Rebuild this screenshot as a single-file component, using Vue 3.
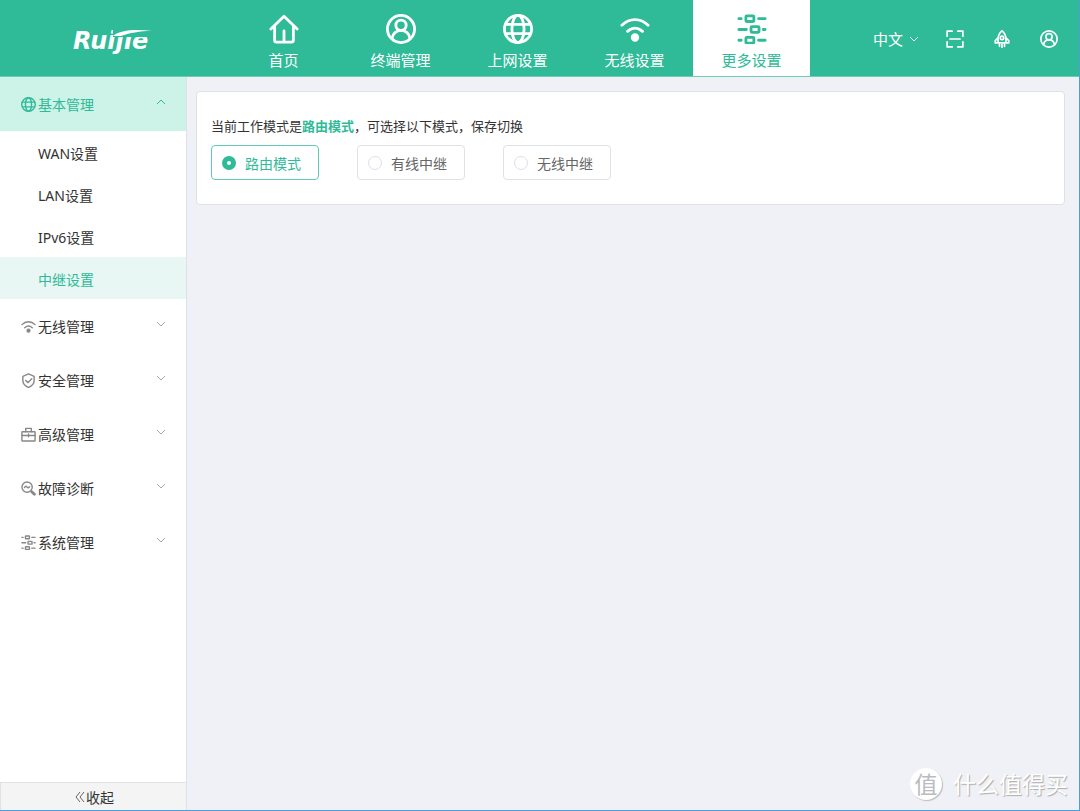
<script setup>
import { ref } from 'vue'

const icons = {
  home: '<path d="M2 16 16 2.500 30 16"/><path d="M6 13v15q0 2 2 2h16q2 0 2-2V13"/><path d="M16 18v11"/>',
  user: '<circle cx="16" cy="16" r="14.500"/><circle cx="16" cy="12" r="5.500"/><path d="M6.500 26c.5-5 4.500-8.500 9.500-8.500s9 3.500 9.500 8.500"/>',
  globe: '<circle cx="16" cy="16" r="14.500"/><ellipse cx="16" cy="16" rx="6.500" ry="14.500"/><path d="M3 11h26M3 21h26"/>',
  wifi: '<path d="M2 12c8-8 20-8 28 0M8 18.500c5-4.500 11-4.500 16 0"/><circle cx="16" cy="25" r="3" fill="currentColor"/>',
  sliders: '<rect x="9.500" y="2" width="8.500" height="6" rx="1"/><path d="M2 5h2.500M23 5h7"/><rect x="15" y="13.500" width="8.500" height="6" rx="1"/><path d="M2 16.500h8M28 16.500h2"/><rect x="9.500" y="25" width="8.500" height="6" rx="1"/><path d="M2 28h2.500M23 28h7"/>',
  shield: '<path d="M16 2 28 7v10c0 6-6 11-12 14C10 28 4 23 4 17V7Z"/><path d="m10 16 5 4.500 8-8"/>',
  briefcase: '<rect x="2" y="10" width="28" height="20" rx="1"/><path d="M10 10V3h12v7M2 18h28M16 15v6M13.500 18h5"/>',
  diagnose: '<circle cx="13" cy="13" r="11"/><path d="M7.500 14c2-4 4-3 5.500-1s3.500 2 5.500-1M21 21l2 2"/><path d="m23.500 23.500 5 5" stroke-width="6"/>',
  scan: '<path d="M2 11V2h9M21 2h9v9M30 21v9h-9M11 30H2v-9M7 16h18"/>',
  rocket: '<path d="M16 1.500c-5 4-7 9-7 15V23h14v-6.500c0-6-2-11-7-15ZM9 14l-5 5v4h5M23 14l5 5v4h-5M11.500 26v3M16 26v5M20.500 26v3"/><circle cx="16" cy="14" r="3"/>'
}

const tabs = [
  { label: '首页', icon: 'home' },
  { label: '终端管理', icon: 'user' },
  { label: '上网设置', icon: 'globe' },
  { label: '无线设置', icon: 'wifi' },
  { label: '更多设置', icon: 'sliders', active: true }
]
const basicItems = ['WAN设置', 'LAN设置', 'IPv6设置', '中继设置']
const groups = [
  { label: '无线管理', icon: 'wifi' },
  { label: '安全管理', icon: 'shield' },
  { label: '高级管理', icon: 'briefcase' },
  { label: '故障诊断', icon: 'diagnose' },
  { label: '系统管理', icon: 'sliders' }
]
const tools = [
  { label: '全屏', icon: 'scan' },
  { label: '优化', icon: 'rocket' },
  { label: '账户', icon: 'user' }
]
const modes = ['路由模式', '有线中继', '无线中继']
const mode = ref('路由模式')
</script>

<template>
  <div class="page">
    <header class="header">
      <a href="#" class="logo">Ruijie
        <svg class="swoosh" viewBox="0 0 40 8" aria-hidden="true">
          <path class="gap" d="M0 0H40V8H0Z" />
          <path class="stroke" d="M0 7C7 1 22 0 39 2C27 2 16 4 8 7Z" />
        </svg>
      </a>
      <nav class="tabs">
        <a v-for="t in tabs" :key="t.label" href="#" class="tab" :class="{ active: t.active }">
          <svg class="icon tab-icon" viewBox="0 0 32 32" v-html="icons[t.icon]"></svg>
          <span>{{ t.label }}</span>
        </a>
      </nav>
      <div class="tools">
        <div class="lang">
          <select aria-label="语言"><option>中文</option></select>
          <svg class="chevron" viewBox="0 0 10 6"><path d="m1 1 4 4 4-4" /></svg>
        </div>
        <button v-for="t in tools" :key="t.label" type="button" class="tool" :aria-label="t.label">
          <svg class="icon tool-icon" viewBox="0 0 32 32" v-html="icons[t.icon]"></svg>
        </button>
      </div>
    </header>

    <div class="body">
      <aside class="sidebar">
        <nav class="menu">
          <button type="button" class="group open" aria-expanded="true">
            <svg class="icon group-icon" viewBox="0 0 32 32" v-html="icons.globe"></svg>
            <span class="group-label">基本管理</span>
            <svg class="chevron" viewBox="0 0 10 6"><path d="m1 5 4-4 4 4" /></svg>
          </button>
          <a v-for="(item, i) in basicItems" :key="item" href="#" class="item" :class="{ active: i === 3 }">{{ item }}</a>
          <button v-for="g in groups" :key="g.label" type="button" class="group" aria-expanded="false">
            <svg class="icon group-icon" viewBox="0 0 32 32" v-html="icons[g.icon]"></svg>
            <span class="group-label">{{ g.label }}</span>
            <svg class="chevron" viewBox="0 0 10 6"><path d="m1 1 4 4 4-4" /></svg>
          </button>
        </nav>
        <button type="button" class="collapse">
          <svg class="double" viewBox="0 0 10 12"><path d="M5 1 1 6l4 5M9 1 5 6l4 5" /></svg>
          <span>收起</span>
        </button>
      </aside>

      <main class="main">
        <section class="panel">
          <p class="sentence">当前工作模式是<strong>路由模式</strong>，可选择以下模式，保存切换</p>
          <div class="modes" role="radiogroup" aria-label="工作模式">
            <label v-for="m in modes" :key="m" class="mode" :class="{ checked: mode === m }">
              <input v-model="mode" type="radio" name="mode" :value="m" />
              <span>{{ m }}</span>
            </label>
          </div>
        </section>
      </main>
    </div>

    <div class="watermark">
      <span class="badge">值</span>
      <span>什么值得买</span>
    </div>
  </div>
</template>

<style>
body {
  margin: 0;
}
</style>

<style scoped>
.page {
  position: relative;
  display: flex;
  flex-direction: column;
  min-height: 100vh;
  box-sizing: border-box;
  border-right: 1px solid #4a9fdc;
  border-bottom: 1px solid #4a9fdc;
  background: #eff1f6;
  color: #333;
  font-family: "Noto Sans", "Noto Sans CJK SC", sans-serif;
  font-size: 14px;
}
a {
  color: inherit;
  text-decoration: none;
}
button,
select {
  margin: 0;
  padding: 0;
  border: 0;
  background: none;
  color: inherit;
  font: inherit;
}
svg {
  display: block;
  flex: none;
  fill: none;
  stroke: currentColor;
}
.icon {
  stroke-width: 2;
  stroke-linecap: round;
  stroke-linejoin: round;
}
.header {
  display: flex;
  height: 76px;
  background: #2fba98;
  border-bottom: 1px solid #6fcbb5;
  color: #fff;
}
.logo {
  position: relative;
  flex: none;
  box-sizing: border-box;
  width: 225px;
  padding: 25px 0 0 73px;
  font: italic bold 24px/32px "DejaVu Sans", sans-serif;
}
.swoosh {
  position: absolute;
  left: 113px;
  top: 29px;
  width: 40px;
  height: 8px;
  stroke: none;
}
.gap {
  fill: #2fba98;
}
.stroke {
  fill: #fff;
}
.tabs {
  display: flex;
}
.tab {
  display: flex;
  flex-direction: column;
  align-items: center;
  box-sizing: border-box;
  width: 117px;
  padding-top: 14px;
  font-size: 15px;
  line-height: 24px;
}
.tab-icon {
  width: 30px;
  height: 30px;
  margin-bottom: 4px;
  stroke-width: 3;
}
.tab.active {
  background: #fff;
  color: #2fba98;
}
.tools {
  display: flex;
  align-items: center;
  gap: 29px;
  margin-left: auto;
  padding: 2px 21px 0 0;
}
.lang {
  display: flex;
  align-items: center;
  gap: 5px;
  margin-right: -2px;
  font-size: 15px;
}
.lang select {
  appearance: none;
  line-height: 24px;
}
.chevron {
  width: 10px;
  height: 6px;
}
.tool {
  display: block;
}
.tool-icon {
  width: 18px;
  height: 18px;
  stroke-width: 3;
}
.body {
  display: flex;
  flex: 1;
}
.sidebar {
  display: flex;
  flex: none;
  flex-direction: column;
  width: 186px;
  background: #fff;
  border-right: 1px solid #dfe1e5;
}
.menu {
  display: flex;
  flex: 1;
  flex-direction: column;
}
.group {
  display: flex;
  align-items: center;
  height: 54px;
  padding: 0 20px 0 21px;
  text-align: left;
}
.group-icon {
  width: 15px;
  height: 15px;
  margin-right: 2px;
  color: #888;
  stroke-width: 3;
}
.group-label {
  flex: 1;
}
.group .chevron {
  margin-bottom: 4px;
  color: #aaa;
}
.group.open {
  background: #cdf2e8;
  color: #2fba98;
}
.group.open .icon,
.group.open .chevron {
  color: #2fba98;
}
.item {
  display: flex;
  align-items: center;
  box-sizing: border-box;
  height: 42px;
  padding: 2px 0 0 38px;
}
.item.active {
  background: #e8f7f3;
  color: #2fba98;
}
.collapse {
  display: flex;
  align-items: center;
  justify-content: center;
  gap: 1px;
  height: 28px;
  padding-left: 2px;
  border-top: 1px solid #dfe1e5;
  border-left: 1px solid #dfe1e5;
  background: #f4f4f4;
}
.double {
  width: 10px;
  height: 12px;
  color: #666;
}
.main {
  flex: 1;
  padding: 14px 14px 14px 9px;
}
.panel {
  padding: 23px 14px 24px;
  background: #fff;
  border: 1px solid #dfe1e5;
  border-radius: 4px;
}
.sentence {
  margin: 0 0 8px;
  font-size: 13px;
  line-height: 22px;
}
.sentence strong {
  color: #2fba98;
}
.modes {
  display: flex;
  gap: 38px;
}
.mode {
  display: flex;
  align-items: center;
  gap: 9px;
  box-sizing: border-box;
  width: 108px;
  height: 35px;
  padding-left: 10px;
  border: 1px solid #dfe1e5;
  border-radius: 4px;
  color: #666;
}
.mode input {
  appearance: none;
  flex: none;
  box-sizing: border-box;
  width: 14px;
  height: 14px;
  margin: 0;
  border: 1px solid #dcdfe6;
  border-radius: 50%;
  background: #fff;
}
.mode.checked {
  border-color: #62cbb2;
  color: #2fba98;
}
.mode.checked input {
  border: 5px solid #2fba98;
}
.watermark {
  position: absolute;
  right: 11px;
  bottom: 9px;
  display: flex;
  align-items: center;
  gap: 11px;
  color: #fff;
  font-size: 23px;
  line-height: 34px;
  text-shadow: 1px 1px 1px #aaa;
}
.badge {
  width: 32px;
  height: 32px;
  border-radius: 50%;
  background: #fff;
  box-shadow: 1px 1px 1px #bbb;
  color: #b9bbc0;
  line-height: 32px;
  text-align: center;
  text-shadow: none;
}
</style>
